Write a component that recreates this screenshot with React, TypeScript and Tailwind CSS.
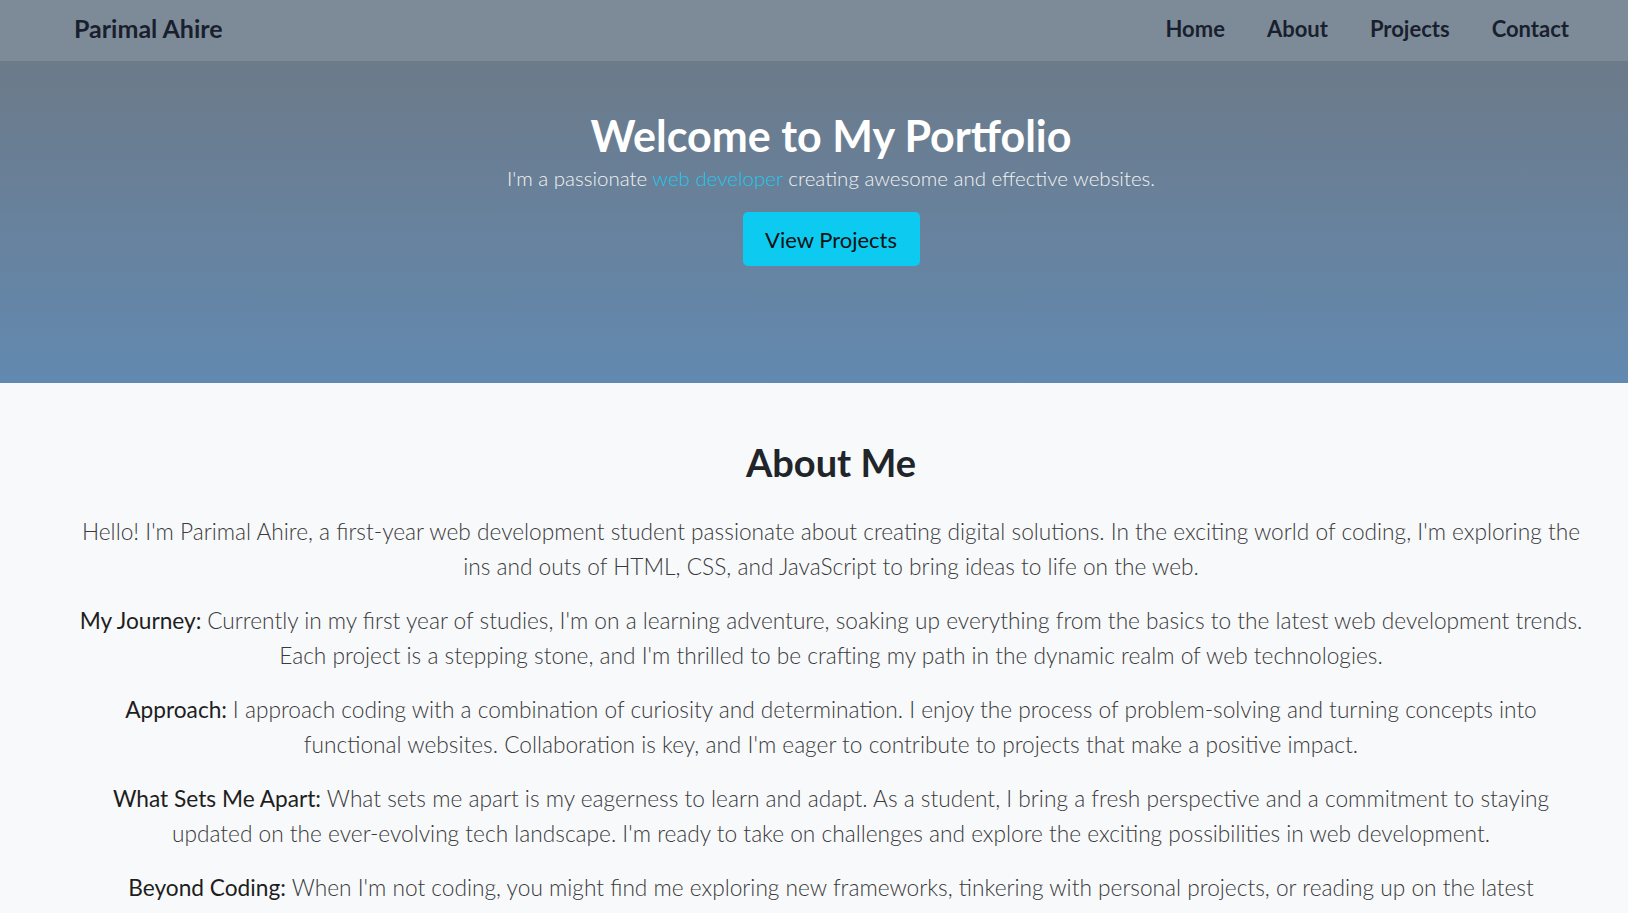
import React from "react";

const links = ["Home", "About", "Projects", "Contact"];

// lines are broken where the original wraps them
const sections = [
  {
    label: "",
    lines: [
      "Hello! I'm Parimal Ahire, a first-year web development student passionate about creating digital solutions. In the exciting world of coding, I'm exploring the",
      "ins and outs of HTML, CSS, and JavaScript to bring ideas to life on the web.",
    ],
  },
  {
    label: "My Journey:",
    lines: [
      "Currently in my first year of studies, I'm on a learning adventure, soaking up everything from the basics to the latest web development trends.",
      "Each project is a stepping stone, and I'm thrilled to be crafting my path in the dynamic realm of web technologies.",
    ],
  },
  {
    label: "Approach:",
    lines: [
      "I approach coding with a combination of curiosity and determination. I enjoy the process of problem-solving and turning concepts into",
      "functional websites. Collaboration is key, and I'm eager to contribute to projects that make a positive impact.",
    ],
  },
  {
    label: "What Sets Me Apart:",
    lines: [
      "What sets me apart is my eagerness to learn and adapt. As a student, I bring a fresh perspective and a commitment to staying",
      "updated on the ever-evolving tech landscape. I'm ready to take on challenges and explore the exciting possibilities in web development.",
    ],
  },
  {
    label: "Beyond Coding:",
    lines: [
      "When I'm not coding, you might find me exploring new frameworks, tinkering with personal projects, or reading up on the latest",
      "industry news. I believe in continuous learning and growth, both personally and professionally.",
    ],
  },
];

const App = () => {
  return (
    <div className="min-h-screen bg-[#f8f9fa] font-['Lato','Liberation_Sans',sans-serif]">
      <nav className="flex h-[61px] items-center justify-between bg-[#7d8b99] pb-[4px] pl-[74px] pr-[59px]">
        <span className="text-[25px] font-bold text-[#1a1f2e]">Parimal Ahire</span>
        <ul className="flex items-center gap-[42px]">
          {links.map((l) => (
            <li key={l} className="text-[22px] font-bold text-[#1a1f2e]">
              {l}
            </li>
          ))}
        </ul>
      </nav>

      <header className="flex h-[322px] flex-col items-center bg-gradient-to-b from-[#6c7a89] to-[#6289b0] pl-[34px] pt-[48px]">
        <h1 className="text-[43px] font-bold leading-[54px] text-white">Welcome to My Portfolio</h1>
        <p className="text-[20.5px] font-light leading-[30px] text-[#f2f2f2]">
          I'm a passionate <span className="text-[#1ec8ee]">web developer</span> creating awesome and effective
          websites.
        </p>
        <button className="mt-[19px] h-[54px] w-[177px] rounded-[5px] bg-[#0dcaf0] text-[22px] text-[#111]">
          View Projects
        </button>
      </header>

      <section className="flex flex-col items-center pl-[40px] pr-[6px] pt-[55px] pb-[40px]">
        <h2 className="mb-[28px] text-[38px] font-bold leading-[48px] text-[#212529]">About Me</h2>
        {sections.map((s, i) => (
          <p key={i} className="mb-[19px] text-center text-[22.7px] font-light leading-[35px] text-[#3a3a3a]">
            {s.label && <span className="font-normal text-[#1e1e1e]">{s.label} </span>}
            {s.lines[0]}
            <br />
            {s.lines[1]}
          </p>
        ))}
      </section>
    </div>
  );
};

export default App;
